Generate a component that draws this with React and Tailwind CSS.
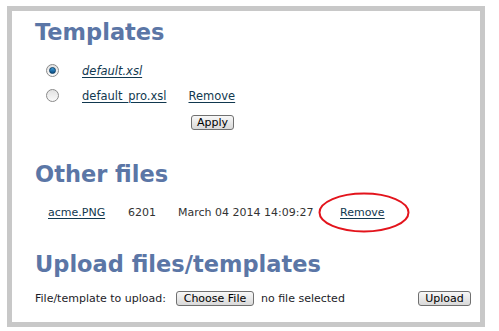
import React from 'react'

const font = { fontFamily: '"DejaVu Sans", Verdana, sans-serif' }

const Heading = ({ children, className = '' }) => (
  <h2 className={`text-[22.5px] leading-[26px] font-bold text-[#5b76a6] ${className}`}>{children}</h2>
)

const Radio = ({ checked }) => (
  <span className="w-[13px] h-[13px] rounded-full border border-[#8a8a8a] bg-gradient-to-b from-[#e2e2e2] to-[#fafafa] flex items-center justify-center">
    {checked && (
      <span className="w-[7px] h-[7px] rounded-full bg-gradient-to-b from-[#3a9ad8] to-[#0a4f86] border border-[#0b3e66]" />
    )}
  </span>
)

const Button = ({ children, className = '' }) => (
  <button
    className={`h-[15px] rounded-[3px] border border-[#707070] bg-gradient-to-b from-[#f8f8f8] to-[#d9d9d9] text-[11px] leading-[13px] text-black flex items-center justify-center ${className}`}
  >
    {children}
  </button>
)

const Link = ({ children, className = '' }) => (
  <a href="#" className={`underline underline-offset-[2px] text-[#11384f] ${className}`}>
    {children}
  </a>
)

const App = () => {
  return (
    <div className="w-[499px] h-[331px] bg-white pt-[6px] pl-[7px]" style={font}>
      <div className="w-[478px] h-[321px] border-[5px] border-[#c8c8c8] pl-[23px] pr-[9px] text-[11px] leading-[14px] text-[#1c1c28]">
        <Heading className="mt-[8px]">Templates</Heading>

        <div className="mt-[13px] h-[25px] flex items-center pl-[11px] text-[11.5px]">
          <Radio checked />
          <Link className="ml-[23px] italic">default.xsl</Link>
        </div>
        <div className="h-[25px] flex items-center pl-[11px] text-[11.5px]">
          <Radio />
          <Link className="ml-[23px]">default_pro.xsl</Link>
          <Link className="ml-[22px]">Remove</Link>
        </div>
        <div className="mt-[7px] pl-[156px]">
          <Button className="w-[43px]">Apply</Button>
        </div>

        <Heading className="mt-[31px]">Other files</Heading>

        <div className="mt-[19px] flex items-center pl-[13px] text-[#333]">
          <Link className="w-[80px]">acme.PNG</Link>
          <span className="w-[50px]">6201</span>
          <span className="w-[162px]">March 04 2014 14:09:27</span>
          <span className="relative">
            <Link>Remove</Link>
            <svg className="absolute left-[-22px] top-[-14px]" width="92" height="41" viewBox="0 0 92 41">
              <ellipse cx="46" cy="20.5" rx="44.5" ry="19" fill="none" stroke="#e3141c" strokeWidth="2" />
            </svg>
          </span>
        </div>

        <Heading className="mt-[31px]">Upload files/templates</Heading>

        <div className="mt-[14px] flex items-center h-[15px]">
          <span>File/template to upload:</span>
          <Button className="ml-[10px] w-[78px]">Choose File</Button>
          <span className="ml-[7px]">no file selected</span>
          <Button className="ml-auto w-[53px]">Upload</Button>
        </div>
      </div>
    </div>
  )
}

export default App
